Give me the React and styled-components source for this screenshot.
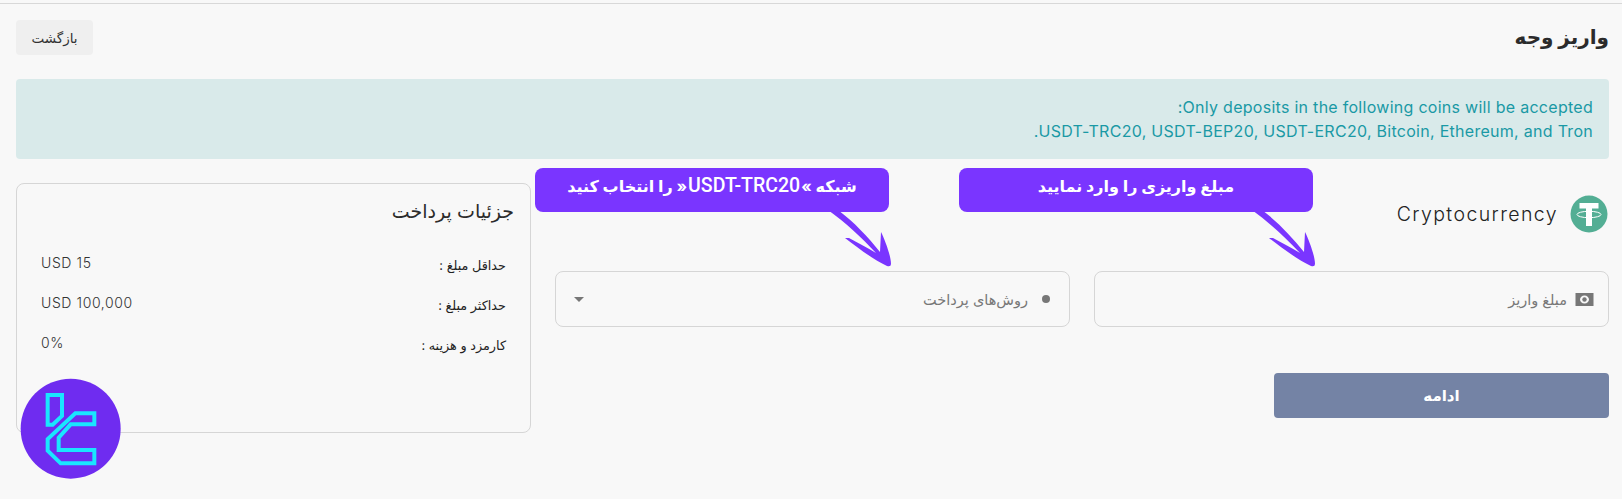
import React from 'react';
import styled, { createGlobalStyle } from 'styled-components';

const GlobalStyle = createGlobalStyle`
  html, body {
    margin: 0;
    padding: 0;
    background: #f8f8f8;
  }
  * {
    box-sizing: border-box;
  }
  body {
    font-family: Inter, "DejaVu Sans", sans-serif;
    color: #2b2b2b;
  }
`;

const Page = styled.div`
  position: relative;
  width: 1622px;
  height: 499px;
  padding: 20px 13px 0 16px;
  background: #f8f8f8;
  overflow: hidden;
  &::before {
    content: '';
    position: absolute;
    top: 3px;
    left: 0;
    right: 0;
    height: 1px;
    background: #d8d8d8;
  }
`;

const Header = styled.div`
  display: flex;
  justify-content: space-between;
  align-items: flex-start;
  height: 59px;
`;

const Title = styled.h1`
  margin: 3px 0 0;
  font-size: 20px;
  line-height: 28px;
  font-weight: 700;
  color: #2b2b2b;
`;

const BackButton = styled.button`
  width: 77px;
  height: 35px;
  border: none;
  border-radius: 4px;
  background: #efefef;
  color: #333;
  font-family: inherit;
  font-size: 13.5px;
`;

const Alert = styled.div`
  height: 80px;
  padding: 16px 16px 0;
  border-radius: 4px;
  background: #d9eaea;
  color: #1a99a5;
  font-size: 16px;
  font-weight: 400;
  letter-spacing: 0.28px;
  line-height: 24px;
`;

const Content = styled.div`
  display: grid;
  grid-template-columns: 1054px 515px;
  justify-content: space-between;
  margin-top: 24px;
`;

const Main = styled.div`
  display: flex;
  flex-direction: column;
`;

const MethodHeading = styled.div`
  display: flex;
  align-items: center;
  gap: 12px;
  height: 38px;
  margin-top: 12px;
  padding-right: 1px;
  font-size: 19.5px;
  font-weight: 300;
  letter-spacing: 1.4px;
  color: #222;
`;

const Fields = styled.div`
  display: grid;
  grid-template-columns: 515px 515px;
  gap: 24px;
  margin-top: 38px;
`;

const FieldWrap = styled.div`
  position: relative;
`;

const Field = styled.div`
  display: flex;
  align-items: center;
  gap: 8px;
  height: 56px;
  padding: 0 14px;
  border: 1px solid #d6d6d6;
  border-radius: 8px;
  color: #777;
  font-size: 14.5px;
`;

const Dot = styled.span`
  width: 8px;
  height: 8px;
  margin: 0 5px 0 6px;
  border-radius: 50%;
  background: #777;
`;

const Caret = styled.span`
  margin-right: auto;
  margin-left: 4px;
  border-top: 5px solid #777;
  border-left: 5px solid transparent;
  border-right: 5px solid transparent;
`;

const Callout = styled.div`
  position: absolute;
  top: -103px;
  left: ${(props) => props.$left}px;
  width: 354px;
  height: 44px;
  border-radius: 8px;
  background: #7a35ff;
  color: #fff;
  font-size: 16px;
  font-weight: 700;
  line-height: 36px;
  text-align: center;
`;

const LatinName = styled.span`
  margin: 0 1px;
  font-family: Roboto, sans-serif;
  font-size: 19.5px;
  font-weight: 500;
`;

const ArrowSvg = styled.svg`
  position: absolute;
  top: 42px;
  left: 281px;
`;

const Submit = styled.button`
  align-self: flex-start;
  width: 335px;
  height: 45px;
  margin-top: 46px;
  border: none;
  border-radius: 4px;
  background: #7483a5;
  color: #fff;
  font-family: inherit;
  font-size: 15px;
  font-weight: 700;
`;

const Card = styled.div`
  height: 250px;
  padding: 14px 24px 0 24px;
  border: 1px solid #d6d6d6;
  border-radius: 8px;
`;

const CardTitle = styled.h2`
  margin: 0 -8px 18px 0;
  font-size: 19px;
  line-height: 28px;
  font-weight: 400;
  color: #2b2b2b;
`;

const DetailRow = styled.div`
  display: flex;
  justify-content: space-between;
  align-items: center;
  height: 40px;
`;

const DetailLabel = styled.span`
  font-size: 12.8px;
  color: #222;
  padding-top: 3px;
`;

const DetailValue = styled.span`
  font-size: 14px;
  font-weight: 300;
  letter-spacing: 0.6px;
  color: #333;
  direction: ltr;
  margin-top: -3px;
`;

const LogoBadge = styled.svg`
  position: absolute;
  left: 10px;
  top: 370px;
`;

const Arrow = () => (
  <ArrowSvg width="90" height="60" viewBox="0 0 90 60">
    <path
      fill="#7a35ff"
      d="M12 0 L22 0 C38 12 52 27 64 42 L65 22 C69 30 75 46 75 54 Q75 57 71 56 C58 50 42 38 29 28 L33 28 C42 33 52 38 60 43 C46 28 30 13 12 0 Z"
    />
  </ArrowSvg>
);

const TetherIcon = () => (
  <svg width="38" height="38" viewBox="0 0 38 38">
    <circle cx="19" cy="19" r="18.5" fill="#53ae94" />
    <path fill="#fff" d="M9.5 8 H28.5 V13.5 H22 V31 H16 V13.5 H9.5 Z" />
    <ellipse cx="19" cy="19.5" rx="12" ry="3.2" fill="none" stroke="#fff" strokeWidth="1" />
  </svg>
);

const MoneyIcon = () => (
  <svg width="19" height="13" viewBox="0 0 18 13">
    <path
      fill="#777"
      fillRule="evenodd"
      d="M0 0 H18 V13 H0 Z M9 2.5 C6.5 2.5 4.5 4.3 4.5 6.5 C4.5 8.7 6.5 10.5 9 10.5 C11.5 10.5 13.5 8.7 13.5 6.5 C13.5 4.3 11.5 2.5 9 2.5 Z"
    />
    <circle cx="9" cy="6.5" r="2.2" fill="#777" />
  </svg>
);

const Logo = () => (
  <LogoBadge width="120" height="120" viewBox="0 0 360 360">
    <circle cx="182" cy="176" r="150" fill="#6f2cf0" />
    <g fill="none" stroke="#19e6ff" strokeWidth="12">
      <path d="M113 75 H156 V138 L128 164 H113 Z" />
      <path d="M196 130 H253 V163 H182 L146 203 V240 H253 V280 H152 L113 242 V207 Z" />
    </g>
  </LogoBadge>
);

const details = [
  { label: 'حداقل مبلغ :', value: 'USD 15' },
  { label: 'حداکثر مبلغ :', value: 'USD 100,000' },
  { label: 'کارمزد و هزینه :', value: '0%' },
];

export default function App() {
  return (
    <>
      <GlobalStyle />
      <Page dir="rtl">
        <Header>
          <Title>واریز وجه</Title>
          <BackButton>بازگشت</BackButton>
        </Header>
        <Alert>
          Only deposits in the following coins will be accepted:
          <br />
          USDT-TRC20, USDT-BEP20, USDT-ERC20, Bitcoin, Ethereum, and Tron.
        </Alert>
        <Content>
          <Main>
            <MethodHeading>
              <TetherIcon />
              Cryptocurrency
            </MethodHeading>
            <Fields>
              <FieldWrap>
                <Field>
                  <MoneyIcon />
                  مبلغ واریز
                </Field>
                <Callout $left={-135}>
                  مبلغ واریزی را وارد نمایید
                  <Arrow />
                </Callout>
              </FieldWrap>
              <FieldWrap>
                <Field>
                  <Dot />
                  روش‌های پرداخت
                  <Caret />
                </Field>
                <Callout $left={-20}>
                  شبکه »<LatinName>USDT-TRC20</LatinName>« را انتخاب کنید
                  <Arrow />
                </Callout>
              </FieldWrap>
            </Fields>
            <Submit>ادامه</Submit>
          </Main>
          <Card>
            <CardTitle>جزئیات پرداخت</CardTitle>
            {details.map((row) => (
              <DetailRow key={row.label}>
                <DetailLabel>{row.label}</DetailLabel>
                <DetailValue>{row.value}</DetailValue>
              </DetailRow>
            ))}
          </Card>
        </Content>
        <Logo />
      </Page>
    </>
  );
}
